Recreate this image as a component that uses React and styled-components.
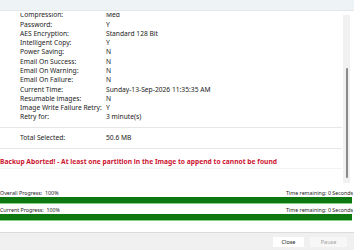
import React from 'react';
import styled, { createGlobalStyle } from 'styled-components';

const GlobalStyle = createGlobalStyle`
  html, body {
    margin: 0;
    padding: 0;
    background: #ffffff;
  }
  body {
    font-family: "Noto Sans", "Open Sans", sans-serif;
    color: #1a1a1a;
  }
`;

const Window = styled.div`
  width: 354px;
  height: 250px;
  display: flex;
  flex-direction: column;
  overflow: hidden;
  background: #ffffff;
`;

const Header = styled.div`
  height: 10px;
  flex: none;
  background: #eef3f6;
  border-bottom: 1px solid #e2e8ec;
`;

const Panel = styled.div`
  height: 172px;
  flex: none;
  display: flex;
`;

const Viewport = styled.div`
  flex: 1;
  margin-top: 2px;
  overflow: hidden;
`;

const List = styled.div`
  margin-top: -2.8px;
  display: flex;
  flex-direction: column;
`;

const Row = styled.div`
  display: flex;
  flex: none;
  height: 9.3px;
  align-items: center;
  padding-left: 20px;
  font-size: 6.7px;
  line-height: 9.3px;
  color: #222;
  white-space: nowrap;
`;

const Label = styled.span`
  width: 86px;
  flex: none;
`;

const Value = styled.span``;

const Separated = styled.div`
  margin-top: 5px;
  border-top: 1px solid #e6e6e6;
  border-bottom: 1px solid #e6e6e6;
  height: 20px;
  display: flex;
  align-items: center;
`;

const TotalRow = styled(Row)`
  height: 20px;
`;

const ErrorText = styled.div`
  margin-top: 8px;
  padding-bottom: 1px;
  border-bottom: 1px solid #f3f3f3;
  font-size: 6.7px;
  font-weight: 700;
  color: #cc1530;
  white-space: nowrap;
  line-height: 10px;
`;

const ScrollTrack = styled.div`
  width: 7px;
  flex: none;
  margin: 4px 4px 0 1px;
  background: #f1f1f1;
  display: flex;
  flex-direction: column;
  align-items: center;
`;

const ScrollThumb = styled.div`
  width: 2px;
  margin-top: 53px;
  height: 110px;
  background: #8a8a8a;
  border-radius: 1px;
`;

const Progress = styled.div`
  flex: 1;
  display: flex;
  flex-direction: column;
  padding-top: 7px;
`;

const ProgressHead = styled.div`
  display: flex;
  justify-content: space-between;
  font-size: 5.3px;
  line-height: 7px;
  height: 7px;
  color: #222;
  white-space: nowrap;
  padding-right: 1px;
`;

const Bar = styled.div`
  height: 6px;
  margin-right: 2px;
  background: #0c780f;
  border-bottom: 1px solid #82d184;
  margin-bottom: 3px;
`;

const Footer = styled.div`
  height: 17px;
  flex: none;
  background: #f0f0f0;
  border-top: 1px solid #dcdcdc;
  display: flex;
  align-items: center;
  justify-content: flex-end;
  gap: 6px;
  padding-right: 7px;
`;

const Button = styled.button`
  width: ${p => p.$w}px;
  height: 10px;
  padding: 0;
  border: none;
  background: ${p => (p.disabled ? '#f7f7f7' : '#ffffff')};
  color: ${p => (p.disabled ? '#a0a0a0' : '#222')};
  font-family: "Noto Sans", sans-serif;
  font-size: 5.5px;
  line-height: 10px;
`;

const settings = [
  ['Compression:', 'Med'],
  ['Password:', 'Y'],
  ['AES Encryption:', 'Standard 128 Bit'],
  ['Intelligent Copy:', 'Y'],
  ['Power Saving:', 'N'],
  ['Email On Success:', 'N'],
  ['Email On Warning:', 'N'],
  ['Email On Failure:', 'N'],
  ['Current Time:', 'Sunday-13-Sep-2026 11:35:35 AM'],
  ['Resumable images:', 'N'],
  ['Image Write Failure Retry:', 'Y'],
  ['Retry for:', '3 minute(s)'],
];

const progress = [
  ['Overall Progress:', '100%'],
  ['Current Progress:', '100%'],
];

export default function App() {
  return (
    <>
      <GlobalStyle />
      <Window>
        <Header />
        <Panel>
          <Viewport>
            <List>
              {settings.map(([label, value]) => (
                <Row key={label}>
                  <Label>{label}</Label>
                  <Value>{value}</Value>
                </Row>
              ))}
              <Separated>
                <TotalRow>
                  <Label>Total Selected:</Label>
                  <Value>50.6 MB</Value>
                </TotalRow>
              </Separated>
              <ErrorText>
                Backup Aborted! - At least one partition in the Image to append to cannot be found
              </ErrorText>
            </List>
          </Viewport>
          <ScrollTrack>
            <ScrollThumb />
          </ScrollTrack>
        </Panel>
        <Progress>
          {progress.map(([label, value]) => (
            <React.Fragment key={label}>
              <ProgressHead>
                <span>{label}&nbsp; {value}</span>
                <span>Time remaining: 0 Seconds</span>
              </ProgressHead>
              <Bar />
            </React.Fragment>
          ))}
        </Progress>
        <Footer>
          <Button $w={31}>Close</Button>
          <Button $w={37} disabled>Pause</Button>
        </Footer>
      </Window>
    </>
  );
}
